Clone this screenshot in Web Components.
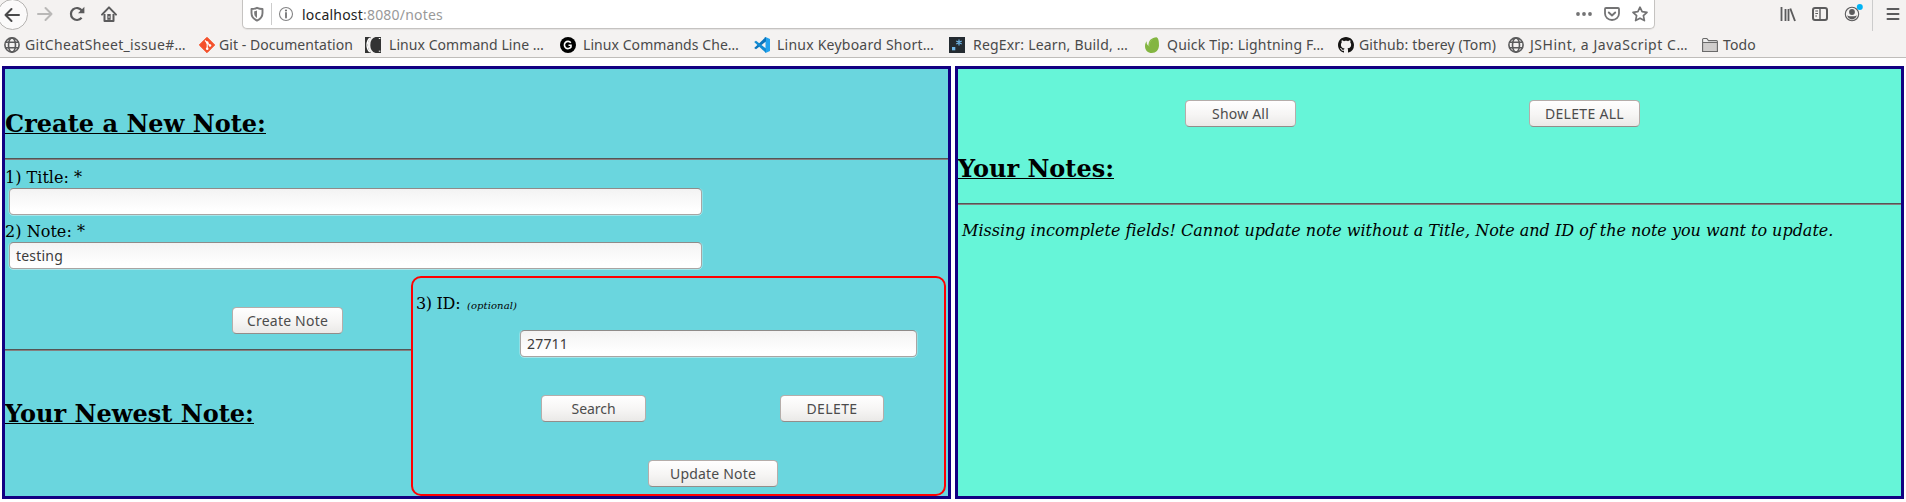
<!DOCTYPE html>
<html lang="en">
<head>
<meta charset="utf-8">
<title>Notes</title>
<style>
body { margin: 0; background: #fff; color: #000; font: 16px "DejaVu Serif", serif; overflow: hidden; }
</style>
</head>
<body>
<notes-page></notes-page>
<script>
const UI = '"Noto Sans","Open Sans",sans-serif';
const icons = {
  back: '<path d="M1.5 8H15M7.5 2L1.5 8l6 6" fill="none" stroke="#4a4a4b" stroke-width="2" stroke-linecap="round" stroke-linejoin="round"/>',
  forward: '<path d="M1 8H14.5M8.5 2l6 6-6 6" fill="none" stroke="#b9b8b7" stroke-width="2" stroke-linecap="round" stroke-linejoin="round"/>',
  reload: '<path d="M12.6 11.8A6 6 0 1 1 12.9 4.6" fill="none" stroke="#5b5b5c" stroke-width="2.2"/><path d="M15.4 .8v6.4H9z" fill="#5b5b5c"/>',
  home: '<path d="M1 8.6L8 1.4l7 7.2" fill="none" stroke="#5b5b5c" stroke-width="2" stroke-linecap="round" stroke-linejoin="round"/><path d="M3.5 8v7h9V8" fill="none" stroke="#5b5b5c" stroke-width="2" stroke-linejoin="round"/><path d="M6.3 8h3.4v5.8H6.3z" fill="#5b5b5c"/><path d="M8 10v2" stroke="#ddd"/>',
  shield: '<path d="M8 1.8c2 .9 3.8 1.2 5.5 1.2v4c0 3.5-2 6-5.5 7.6C4.500 13 2.500 10.500 2.500 7V3C4.200 3 6 2.700 8 1.800z" fill="none" stroke="#79797a" stroke-width="1.9" stroke-linejoin="round"/><path d="M8 4.500v7.500C6 10.800 5.200 9.200 5.200 7V5.200C6.200 5.200 7.100 5 8 4.500z" fill="#79797a"/>',
  info: '<circle cx="8" cy="8" r="6.5" fill="none" stroke="#848485" stroke-width="1.100"/><path d="M8 7v4.500" stroke="#737374" stroke-width="1.800" stroke-linecap="round"/><circle cx="8" cy="4.500" r="1.100" fill="#737374"/>',
  dots: '<g fill="#737374"><circle cx="2" cy="8" r="1.900"/><circle cx="8" cy="8" r="1.900"/><circle cx="14" cy="8" r="1.900"/></g>',
  pocket: '<path d="M2 2h12q1 0 1 1v4.500a7 6.500 0 0 1-14 0V3q0-1 1-1z" fill="none" stroke="#737374" stroke-width="1.800"/><path d="M4.800 6.500L8 9.500l3.200-3" fill="none" stroke="#737374" stroke-width="1.900" stroke-linecap="round" stroke-linejoin="round"/>',
  star: '<path d="M8 1.200l2.100 4.500 4.900.6-3.600 3.400 1 4.900L8 12.200l-4.400 2.400 1-4.900L1 6.300l4.900-.6z" fill="none" stroke="#737374" stroke-width="1.700" stroke-linejoin="round"/>',
  library: '<path d="M1.500 1v14M5.500 3v12M8.500 3v12" stroke="#5b5b5c" stroke-width="1.800"/><path d="M10.300 2.500L15 15" stroke="#5b5b5c" stroke-width="1.900"/>',
  sidebar: '<rect x="1" y="2" width="14" height="12" rx="2" fill="none" stroke="#5b5b5c" stroke-width="2"/><path d="M8 2v12" stroke="#5b5b5c" stroke-width="1.400"/><path d="M3.300 5H6M3.300 7.500H6M3.300 10H5" stroke="#5b5b5c"/>',
  account: '<circle cx="8" cy="8" r="6.700" fill="none" stroke="#5b5b5c" stroke-width="1.100"/><circle cx="8" cy="6" r="2.900" fill="#5b5b5c"/><path d="M3.200 9.300q1.200 1 2.600 1h4.400q1.400 0 2.600-1c-.5 2.700-2.500 4.100-4.800 4.100s-4.300-1.400-4.800-4.100z" fill="#5b5b5c"/><circle cx="15.800" cy="1" r="3" fill="#00b3f4"/>',
  menu: '<path d="M2.500 3h11M2.500 8h11M2.500 13h11" stroke="#5b5b5c" stroke-width="2" stroke-linecap="round"/>',
  globe: '<g fill="none" stroke="#5b5b5c" stroke-width="1.600"><circle cx="8" cy="8" r="7.100"/><ellipse cx="8" cy="8" rx="3.500" ry="7.100"/><path d="M1.500 5.300h13M1.500 10.700h13"/></g>',
  git: '<path d="M8 .3L15.700 8 8 15.700.3 8z" fill="#f4502a" stroke="#f4502a" stroke-linejoin="round"/><path d="M6 3.500l2.200 2.200v6M8.200 5.700L11 8.500" stroke="#fff" fill="none" stroke-width="1.100"/><g fill="#fff"><circle cx="8.200" cy="5.500" r="1.300"/><circle cx="8.200" cy="11.700" r="1.300"/><circle cx="11" cy="8.500" r="1.300"/></g>',
  linux: '<path d="M0 0h5.500v1Q2.800 3 2.800 8t2.700 7v1H0z" fill="#333"/><path d="M4.800 1Q2 3.500 2 8t2.800 7" stroke="#fff" fill="none" stroke-width="1.300"/><path d="M10.500 0H16v16h-5.500Q5.300 14.500 5.300 8T10.500 0z" fill="#333"/><path d="M15.400 1.500h-1.600M15.400 14.200h-1.600" stroke="#fff" fill="none"/>',
  gcircle: '<circle cx="8" cy="8" r="8" fill="#000"/><path d="M10.800 5.700A3.600 3.600 0 1 0 11 10V8.200H8.500" fill="none" stroke="#fff" stroke-width="1.600"/>',
  vscode: '<path d="M11.500 0L16 2v12l-4.500 2z" fill="#22a2ee"/><path d="M12 0v4.500L2 12.200.2 11 11.500.2z" fill="#0b75bd"/><path d="M.2 5L2 3.800l10 7.700V16L.2 5z" fill="#118bd3"/>',
  regexr: '<path d="M0 0h16v16H0z" fill="#242b31"/><path d="M10 2.500v6M7.300 4l5.400 3M12.700 4L7.300 7" stroke="#70b6e8" stroke-width="1.200"/><path d="M3 10h3.300v3.300H3z" fill="#70b6e8"/>',
  envato: '<path d="M12.500.3C8 .8 4 3 4.500 9 2.800 7.500 2.400 6 2.800 4.300 1.500 5.500 1 7.300 1 9.200 1 13.200 4 16 7.800 16c4.300 0 7-3 7.200-7.500C15.100 5 14.600 1 12.500.3z" fill="#83b541"/><path d="M5.300 10C5 6.800 6 4 8.500 2.500" fill="none" stroke="#9bca5e" stroke-width=".5"/>',
  github: '<path fill="#161514" d="M8 0C3.580 0 0 3.580 0 8c0 3.540 2.290 6.530 5.470 7.590.4.070.55-.17.55-.38 0-.19-.01-.82-.01-1.490-2.010.37-2.530-.49-2.690-.94-.09-.23-.48-.94-.82-1.130-.28-.15-.68-.52-.01-.53.63-.01 1.080.58 1.230.82.72 1.210 1.870.87 2.330.66.07-.52.28-.87.51-1.070-1.780-.2-3.640-.89-3.640-3.950 0-.87.31-1.590.82-2.150-.08-.2-.36-1.020.08-2.120 0 0 .67-.21 2.200.82.64-.18 1.320-.27 2-.27s1.360.09 2 .27c1.530-1.040 2.200-.82 2.200-.82.44 1.100.16 1.920.08 2.120.51.56.82 1.270.82 2.150 0 3.070-1.870 3.750-3.650 3.950.29.25.54.73.54 1.480 0 1.070-.01 1.930-.01 2.200 0 .21.15.46.55.38A8.010 8.010 0 0 0 16 8c0-4.420-3.580-8-8-8z"/>',
  folder: '<path d="M.6 14.500V2.600Q.6 1.500 1.600 1.500h3.200L6.500 3.600h8Q15.400 3.600 15.400 4.600v9.900z" fill="#eee" stroke="#6a6a6a" stroke-width="1.100"/><path d="M.6 14.500v-9h14.800v9z" fill="#cfcdcc" stroke="#6a6a6a" stroke-width="1.100"/>'
};

function define(name, css, html) {
  customElements.define(name, class extends HTMLElement {
    constructor() {
      super();
      this.attachShadow({ mode: 'open' }).innerHTML = '<style>' + css + '</style>' + html;
    }
  });
}

// Text tracked so that it fills the width given in the "w" attribute.
const fitted = new Set();
customElements.define('fit-text', class extends HTMLElement {
  constructor() {
    super();
    this.attachShadow({ mode: 'open' }).innerHTML = '<style>:host{display:inline-block;white-space:pre}</style><slot></slot>';
  }
  connectedCallback() { fitted.add(this); }
  fit() {
    this.style.letterSpacing = '0';
    const gap = this.getAttribute('w') - this.getBoundingClientRect().width;
    this.style.letterSpacing = gap / this.textContent.length + 'px';
  }
});

customElements.define('ui-icon', class extends HTMLElement {
  connectedCallback() {
    if (this.shadowRoot) return;
    this.attachShadow({ mode: 'open' }).innerHTML =
      '<style>:host{display:block;width:16px;height:16px;flex:none}svg{display:block;overflow:visible}</style>' +
      '<svg width="16" height="16" viewBox="0 0 16 16">' + icons[this.getAttribute('name')] + '</svg>';
  }
});

customElements.define('book-mark', class extends HTMLElement {
  connectedCallback() {
    if (this.shadowRoot) return;
    const a = n => this.getAttribute(n);
    this.attachShadow({ mode: 'open' }).innerHTML =
      `<style>:host{display:flex;align-items:center;flex:none;width:${a('span')}px;gap:${a('gap')}px}</style>
       <ui-icon name="${a('icon')}"></ui-icon><fit-text w="${a('w')}">${this.textContent}</fit-text>`;
  }
});

define('push-button',
  `:host{display:block;flex:none}
   button{display:block;box-sizing:border-box;width:100%;height:27px;padding:0;border:1px solid #b5adaa;border-bottom-color:#938d8a;border-radius:4.500px;
     background:linear-gradient(#fff,#f6f5f4 55%,#eae9e7);color:#4c4c4c;font:14px/20px ${UI};text-align:center;white-space:nowrap}`,
  '<button><slot></slot></button>');

define('text-field',
  `:host{display:block;flex:none}
   div{box-sizing:border-box;height:27px;padding:0 6px;border:1px solid #a9a5a3;border-top-color:#8f8b89;border-radius:4.500px;
     background:linear-gradient(#f3f3f3,#fff 85%);box-shadow:0 1px 0 #ffffff66, -1px 0 0 #ffffff40, 1px 0 0 #ffffff40;color:#3c3c3c;font:14px/25px ${UI}}`,
  '<div><slot></slot></div>');

define('section-title',
  `:host{display:block}
   h2{margin:0;font:bold 24px/28px "DejaVu Serif",serif}
   ::slotted(fit-text){text-decoration:underline;text-decoration-thickness:1px;text-underline-offset:1px;text-decoration-skip-ink:none}`,
  '<h2><slot></slot></h2>');

define('rule-line', ':host{display:block;height:1px;background:#555;border-bottom:1px solid #858080}', '');

define('browser-bar',
  `:host{display:block;box-sizing:border-box;height:58px;background:#f4f2f1;border-bottom:1px solid #bfbdba;color:#4a4a4a;font:14px/18px ${UI}}
   .nav{display:flex;height:29px}
   .left{display:flex;width:242px}
   .back{width:31px;height:31px;box-sizing:border-box;border:1px solid #b5b3b1;border-radius:50%;background:#fbfafa;margin:-1px 0 0 -3px;padding:6.500px 5.500px}
   .left>ui-icon{margin-top:6px}
   .url{box-sizing:border-box;display:flex;width:1413px;height:29px;background:#fff;border:1px solid #c5c3c1;border-top:0;border-radius:0 0 5px 5px;box-shadow:0 1px 1px #0001;padding-left:6px}
   .url ui-icon{margin-top:6px}
   .sep{width:1px;height:22px;margin:3px 6px 0 6px;background:#ccc}
   .address{flex:1;display:flex;margin:6px 0 0 8px;color:#999}
   .address b{font-weight:400;color:#222}
   .tools{display:flex;gap:16px;padding-left:125px}
   .tools ui-icon{margin-top:6px}
   .tools i{width:1px;height:31px;background:#ccc;margin-left:-4px}
   .marks{display:flex;height:28px;padding:2px 0 0 4px}`,
  `<div class="nav">
    <div class="left"><div class="back"><ui-icon name="back"></ui-icon></div>
      <ui-icon name="forward" style="margin-left:9px"></ui-icon><ui-icon name="reload" style="margin-left:16px"></ui-icon><ui-icon name="home" style="margin-left:16px"></ui-icon></div>
    <div class="url"><ui-icon name="shield"></ui-icon><span class="sep"></span><ui-icon name="info"></ui-icon>
      <div class="address"><b><fit-text w="61">localhost</fit-text></b><fit-text w="80">:8080/notes</fit-text></div>
      <ui-icon name="dots"></ui-icon><ui-icon name="pocket" style="margin-left:12px"></ui-icon><ui-icon name="star" style="margin:6px 6px 0 12px"></ui-icon></div>
    <div class="tools"><ui-icon name="library"></ui-icon><ui-icon name="sidebar"></ui-icon><ui-icon name="account"></ui-icon><i></i><ui-icon name="menu" style="margin-left:-4px"></ui-icon></div>
  </div>
  <div class="marks">
    <book-mark icon="globe" span="195" gap="5" w="161">GitCheatSheet_issue#…</book-mark>
    <book-mark icon="git" span="166" gap="4" w="134">Git - Documentation</book-mark>
    <book-mark icon="linux" span="195" gap="8" w="155">Linux Command Line …</book-mark>
    <book-mark icon="gcircle" span="194" gap="7" w="156">Linux Commands Che…</book-mark>
    <book-mark icon="vscode" span="195" gap="7" w="157">Linux Keyboard Short…</book-mark>
    <book-mark icon="regexr" span="195" gap="8" w="155">RegExr: Learn, Build, …</book-mark>
    <book-mark icon="envato" span="194" gap="7" w="157">Quick Tip: Lightning F…</book-mark>
    <book-mark icon="github" span="170" gap="5" w="137">Github: tberey (Tom)</book-mark>
    <book-mark icon="globe" span="194" gap="6" w="158">JSHint, a JavaScript C…</book-mark>
    <book-mark icon="folder" span="60" gap="5" w="33">Todo</book-mark>
  </div>`);

define('note-panel',
  ':host{display:block;box-sizing:border-box;width:949px;height:433px;border:3px solid #120082;background:var(--fill);overflow:hidden}',
  '<slot></slot>');

define('id-box',
  `:host{display:block;box-sizing:border-box;width:535px;height:220px;margin-top:7px;border:2px solid #f00;border-radius:10px;padding:16px 0 0 3px}
   .label{height:36px;line-height:20px}
   em{font-size:10px;margin-left:2px}
   text-field{width:397px;margin-left:104px}
   .pair{display:flex;gap:134px;margin:38px 0 0 125px}
   .last{width:130px;margin:38px 0 0 232px}`,
  `<div class="label"><fit-text w="49">3) ID: </fit-text><em><fit-text w="50">(optional)</fit-text></em></div>
   <text-field><fit-text w="41">27711</fit-text></text-field>
   <div class="pair"><push-button style="width:105px"><fit-text w="44">Search</fit-text></push-button><push-button style="width:104px"><fit-text w="51">DELETE</fit-text></push-button></div>
   <push-button class="last"><fit-text w="86">Update Note</fit-text></push-button>`);

define('create-form',
  `:host{display:block}
   .title{padding:41px 0 20px}
   .label{box-sizing:border-box;height:27px;padding-top:7px;line-height:20px}
   text-field{width:693px;margin-left:4px}
   .lower{display:grid;grid-template-columns:406px 535px}
   .create{width:111px;margin:38px 0 15px 227px}
   .newest{margin-top:49px}`,
  `<section-title class="title"><fit-text w="261">Create a New Note:</fit-text></section-title>
   <rule-line></rule-line>
   <div class="label" style="height:28px;padding-top:8px"><fit-text w="77">1) Title: *</fit-text></div>
   <text-field></text-field>
   <div class="label"><fit-text w="80">2) Note: *</fit-text></div>
   <text-field><fit-text w="47">testing</fit-text></text-field>
   <div class="lower"><div>
     <push-button class="create"><fit-text w="81">Create Note</fit-text></push-button>
     <rule-line></rule-line>
     <section-title class="newest"><fit-text w="249">Your Newest Note:</fit-text></section-title>
   </div><id-box></id-box></div>`);

define('notes-list',
  `:host{display:block}
   .actions{display:flex;gap:233px;padding:31px 0 0 227px}
   push-button{width:111px}
   section-title{padding:28px 0 20px}
   p{margin:16px 0 0 4px;line-height:20px;font-style:italic}`,
  `<div class="actions"><push-button><fit-text w="57">Show All</fit-text></push-button><push-button><fit-text w="79">DELETE ALL</fit-text></push-button></div>
   <section-title><fit-text w="156">Your Notes:</fit-text></section-title>
   <rule-line></rule-line>
   <p><fit-text w="871">Missing incomplete fields! Cannot update note without a Title, Note and ID of the note you want to update.</fit-text></p>`);

define('notes-page',
  ':host{display:block}main{display:flex;gap:4px;padding:8px 2px 3px}',
  `<browser-bar></browser-bar>
   <main><note-panel style="--fill:#6ad6de"><create-form></create-form></note-panel>
   <note-panel style="--fill:#66f5d8"><notes-list></notes-list></note-panel></main>`);

fitted.forEach(t => t.fit());
</script>
</body>
</html>
